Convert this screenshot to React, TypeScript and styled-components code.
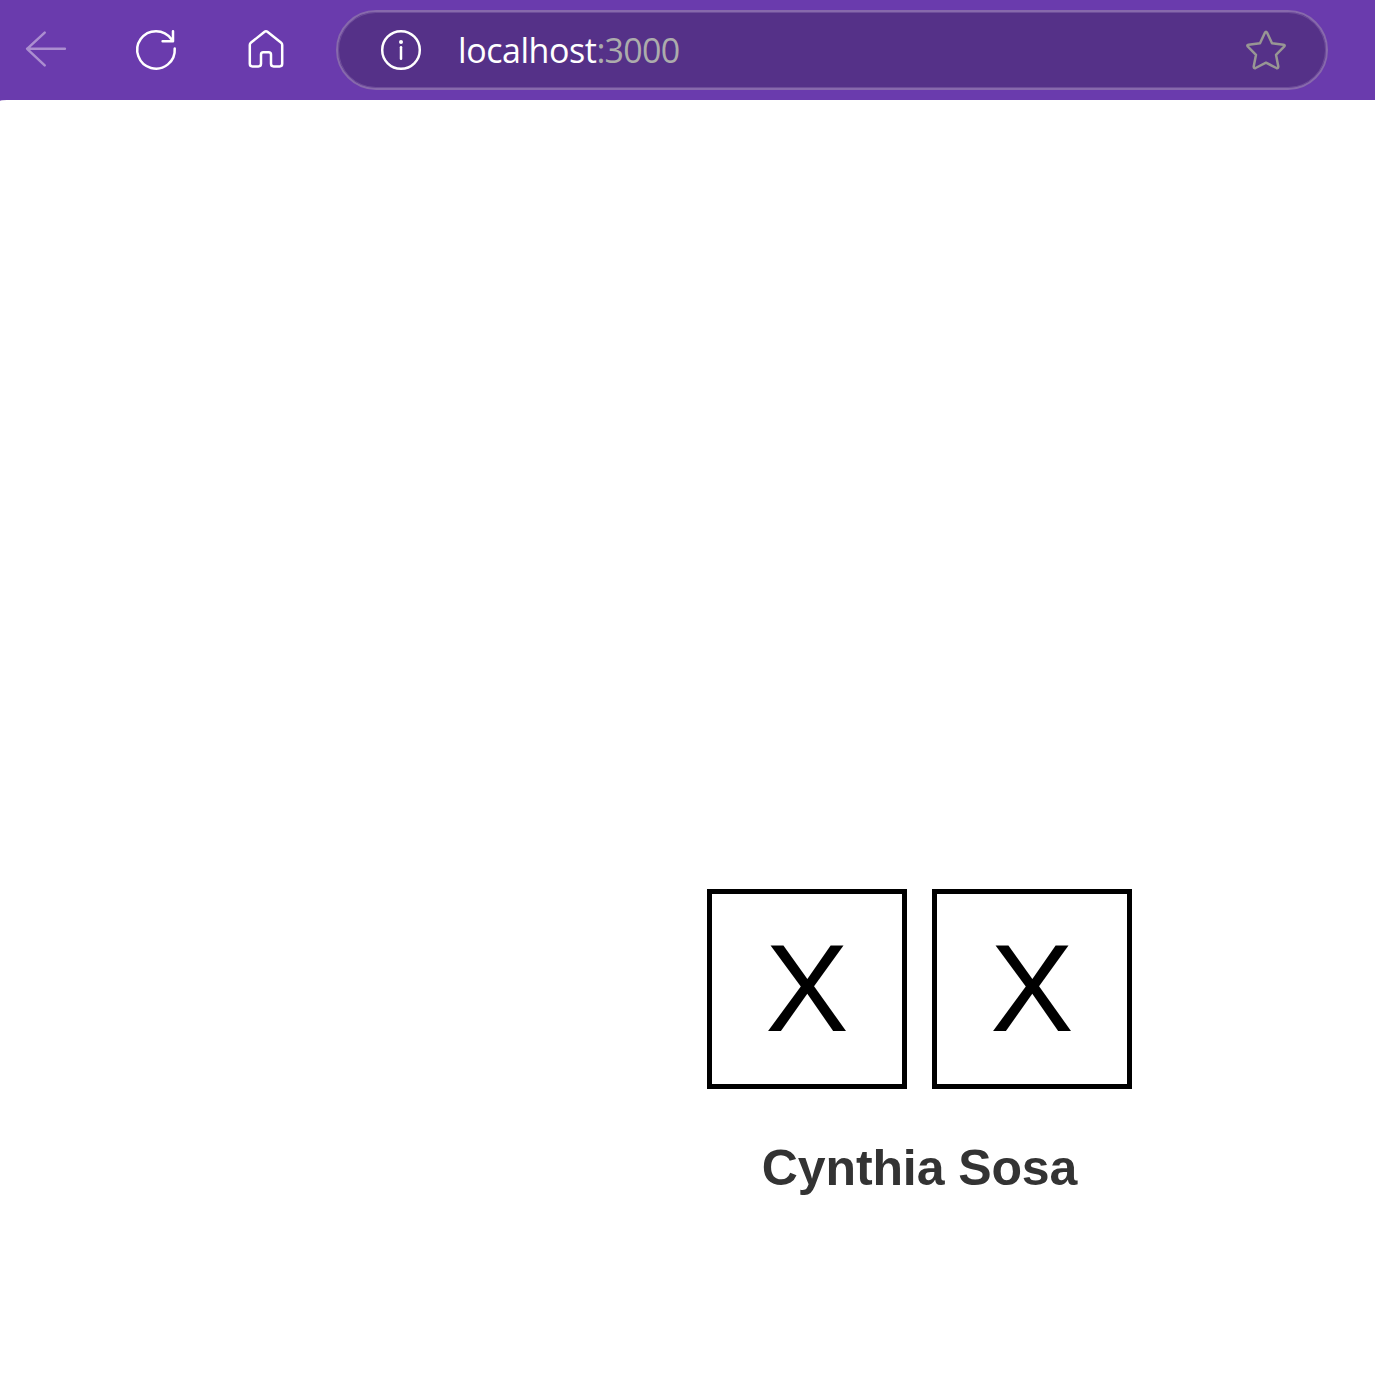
import React from 'react';
import styled, { createGlobalStyle } from 'styled-components';

const GlobalStyle = createGlobalStyle`
  body { margin: 0; background: #6a3bad; }
`;

const Window = styled.div`
  display: flex;
  flex-direction: column;
  height: 1385px;
  font-family: "Liberation Sans", Arial, sans-serif;
`;

const Toolbar = styled.header`
  box-sizing: border-box;
  display: flex;
  align-items: center;
  flex: none;
  height: 100px;
  padding: 0 47px 0 21px;
  background: #6a3bad;
`;

const NavButtons = styled.nav`
  display: flex;
  gap: 60px;
  margin-right: 45px;
`;

const Glyph = styled.svg<{ $color?: string }>`
  display: block;
  flex: none;
  width: 50px;
  height: 50px;
  fill: none;
  stroke: ${(p) => p.$color ?? '#ffffff'};
  stroke-width: 2.5;
  stroke-linecap: round;
  stroke-linejoin: round;
`;

const AddressBar = styled.div`
  box-sizing: border-box;
  display: flex;
  align-items: center;
  flex: 1;
  height: 80px;
  padding: 0 35px 0 38px;
  border: 2px solid #8769ac;
  border-radius: 40px;
  background: #553188;
  box-shadow: inset 0 0 0 1px #6e4d9a;
`;

const Url = styled.div`
  flex: 1;
  display: flex;
  margin-left: 32px;
  font: 34px/48px "Open Sans", "Noto Sans", sans-serif;
  white-space: nowrap;
`;

const Host = styled.span`
  color: #ffffff;
  letter-spacing: -0.45px;
`;

const Port = styled.span`
  color: #acacac;
  letter-spacing: -0.75px;
`;

const Page = styled.main`
  flex: 1;
  display: flex;
  flex-direction: column;
  align-items: center;
  padding: 789px 0 0 464px;
  border-top-left-radius: 7px 1px;
  background: #ffffff;
`;

const Tiles = styled.div`
  display: flex;
  gap: 25px;
`;

const Tile = styled.div`
  box-sizing: border-box;
  display: flex;
  align-items: center;
  justify-content: center;
  width: 200px;
  height: 200px;
  padding-bottom: 2px;
  border: 5px solid #000000;
  color: #000000;
  font-size: 125px;
  line-height: 144px;
`;

const Name = styled.h1`
  margin: 51px 0 0;
  color: #333333;
  font-size: 50px;
  font-weight: 700;
  letter-spacing: -0.1px;
  line-height: 57px;
`;

const marks = ['X', 'X'];

export default function App() {
  return (
    <>
      <GlobalStyle />
      <Window>
        <Toolbar>
          <NavButtons>
            <Glyph viewBox="0 0 50 50" $color="#ab8ed0">
              <path d="M23.7 7.7 6.1 23.8 23.7 40.3M6.1 23.8H43.9" />
            </Glyph>
            <Glyph viewBox="0 0 50 50">
              <path d="M43.7 23.5A18.75 18.75 0 1 1 40.4 14.2M42 6.3V16.2H31.6" />
            </Glyph>
            <Glyph viewBox="0 0 50 50">
              <path d="M23.6 6.8 9.8 17.8Q8.8 18.6 8.8 20V38.8Q8.8 41.4 11.4 41.4H17.4Q20 41.4 20 38.8V29.6Q20 27.3 22.3 27.3H27.7Q30 27.3 30 29.6V38.8Q30 41.4 32.6 41.4H38.6Q41.2 41.4 41.2 38.8V20Q41.2 18.6 40.2 17.8L26.4 6.8Q25 5.7 23.6 6.8Z" />
            </Glyph>
          </NavButtons>
          <AddressBar>
            <Glyph viewBox="0 0 50 50">
              <circle cx="25" cy="25" r="18.8" />
              <path d="M25 22.3V33.8" />
              <circle cx="25" cy="17" r="2" fill="#ffffff" stroke="none" />
            </Glyph>
            <Url>
              <Host>localhost</Host>
              <Port>:3000</Port>
            </Url>
            <Glyph viewBox="0 0 50 50" $color="#989694">
              <path d="M23.9 7.7Q25 5.9 26.1 7.7L31 18.2 42.5 19.7Q44.5 20.1 43.1 21.7L35 29.8 37.3 41.5Q37.3 43.7 35.4 43L25 37.7 14.6 43Q12.7 43.7 12.7 41.5L15 29.8 6.9 21.7Q5.5 20.1 7.5 19.7L19 18.2Z" />
            </Glyph>
          </AddressBar>
        </Toolbar>
        <Page>
          <Tiles>
            {marks.map((mark, i) => (
              <Tile key={i}>{mark}</Tile>
            ))}
          </Tiles>
          <Name>Cynthia Sosa</Name>
        </Page>
      </Window>
    </>
  );
}
